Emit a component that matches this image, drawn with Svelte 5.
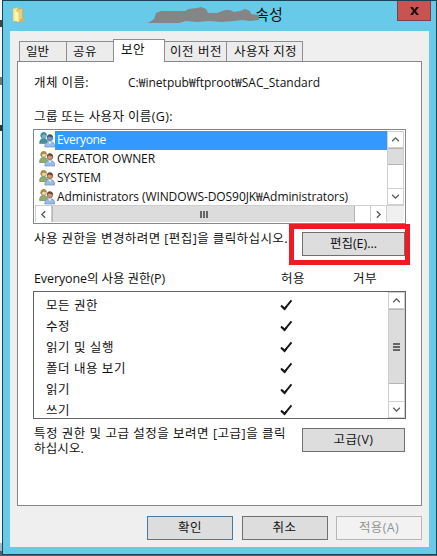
<script>
  const tabs = [
    { label: '일반', x: 6, w: 48, tw: 22 },
    { label: '공유', x: 6, w: 48, tw: 23 },
    { label: '보안', x: 7, w: 52, tw: 23, active: true },
    { label: '이전 버전', x: 5, w: 63, tw: 51 },
    { label: '사용자 지정', x: 7, w: 77, tw: 62 }
  ];
  const users = [
    { name: 'Everyone', w: 48 },
    { name: 'CREATOR OWNER', w: 97 },
    { name: 'SYSTEM', w: 43 },
    { name: 'Administrators (WINDOWS-DOS90JK₩Administrators)', w: 290 }
  ];
  const permissions = [
    { name: '모든 권한', w: 51 },
    { name: '수정', w: 23 },
    { name: '읽기 및 실행', w: 67 },
    { name: '폴더 내용 보기', w: 79 },
    { name: '읽기', w: 23 },
    { name: '쓰기', w: 23 }
  ];

  // Tracks a label so that it spans the given number of pixels.
  function fit(node, width) {
    const natural = node.getBoundingClientRect().width;
    const gap = (width + 1 - natural) / node.textContent.length;
    node.style.letterSpacing = `${gap.toFixed(3)}px`;
  }
</script>

{#snippet arrow(dir)}
  <svg class="arrow {dir}" width="9" height="9" viewBox="0 0 9 9"><path d="M1.2 6.2 4.5 2.9 7.8 6.2" /></svg>
{/snippet}

{#snippet people(tinted)}
  <svg class="people" class:tinted width="16" height="17" viewBox="0 0 16 17">
    <path class="body1" d="M.6 12.500c0-3.500 1.200-5 3.900-5s4.500 1.500 4.500 5z" fill="#8fae6c" stroke="#5f7e4f" stroke-width=".6" />
    <circle class="face1" cx="4.600" cy="4.600" r="2.700" fill="#f0d9a8" stroke="#8a7340" stroke-width=".6" />
    <path class="hair1" d="M1.600 5.500C.8-.2 8-.2 7.700 4.200 6 4 4 3 3.300 4.500L2.800 7z" fill="#a88a45" />
    <path d="M5.800 16c0-3.800 1.700-5.500 5-5.500s4.900 1.700 4.900 5.500z" fill="#9dbce2" stroke="#6285b4" stroke-width=".6" />
    <path d="m9.300 10.600 1.600 2.700 1.600-2.700z" fill="#f4f9ff" />
    <circle class="face2" cx="11" cy="7" r="2.800" fill="#cd9573" stroke="#6b4636" stroke-width=".6" />
    <path class="hair2" d="M8 6.900c-.4-5 6.300-4.500 6-.2C12.300 6.400 10.300 5 9 5.900z" fill="#6b4632" />
  </svg>
{/snippet}

<div class="screen">
  <div class="window">
    <header>
      <svg class="folder" width="14" height="17" viewBox="0 0 14 17">
        <path d="M1 1.500 6 .8v13L1 14.500z" fill="#f7e7a0" stroke="#d9bf69" stroke-width=".6" />
        <path d="M5 2.500 10.500 1.500v12L5 15.500z" fill="#edcf70" stroke="#c9a750" stroke-width=".6" />
        <path d="M3 4 6.500 5.500v9.500L3 13.500z" fill="#fff3b8" />
        <path d="m8 12 4.500-1v3L8 15z" fill="#d8b25a" />
      </svg>
      <span class="title"><span use:fit={27}>속성</span></span>
      <button class="close" aria-label="닫기">
        <svg width="9" height="8" viewBox="0 0 10 9"><path d="M0 0h3l2 2.700L7 0h3L6.600 4.400 10 9H7L5 6.200 3 9H0l3.400-4.600z" fill="#20100f" /></svg>
      </button>
    </header>
    <svg class="scribble" width="112" height="18" viewBox="0 0 112 18">
      <path d="M3 15 7 12 9 6 14 4H38L42 2 50 1 54 0 59 2 61 6 70 6 78 3 83 3 87 5 93 4 98 2 103 4 104 7 112 8V13L103 14 96 13 87 14 74 15 62 14 50 15 39 14 32 16H0z" fill="#858585" />
    </svg>

    <main>
      <nav>
        {#each tabs as t}
          <div class="tab" class:active={t.active} style="width:{t.w}px; padding-left:{t.x}px"><span use:fit={t.tw}>{t.label}</span></div>
        {/each}
      </nav>
      <section class="pane">
        <div class="object"><span class="key"><span use:fit={54}>개체 이름:</span></span><span class="latin" use:fit={191}>C:₩inetpub₩ftproot₩SAC_Standard</span></div>
        <div class="label"><span use:fit={138}>그룹 또는 사용자 이름(G):</span></div>

        <div class="userlist">
          <div class="top">
            <div class="users">
              {#each users as u, i}
                <div class="user" class:selected={i === 0}>
                  {@render people(i === 0)}
                  <div class="name"><span class="latin" use:fit={u.w}>{u.name}</span></div>
                </div>
              {/each}
            </div>
            <div class="vbar">
              <div class="sb">{@render arrow('up')}</div>
              <div class="thumb small"></div>
              <div class="track"></div>
              <div class="sb">{@render arrow('down')}</div>
            </div>
          </div>
          <div class="hbar">
            <div class="sb">{@render arrow('left')}</div>
            <div class="hthumb"><i></i><i></i><i></i></div>
            <div class="track"></div>
            <div class="sb">{@render arrow('right')}</div>
            <div class="corner"></div>
          </div>
        </div>

        <div class="action edit">
          <p><span use:fit={253}>사용 권한을 변경하려면 [편집]을 클릭하십시오.</span></p>
          <button class="btn"><span use:fit={46}>편집(E)...</span></button>
          <div class="mark"></div>
        </div>

        <div class="columns">
          <span class="c1"><span use:fit={130}>Everyone의 사용 권한(P)</span></span>
          <span class="c2"><span use:fit={23}>허용</span></span>
          <span><span use:fit={23}>거부</span></span>
        </div>

        <div class="permlist">
          <div class="perms">
            {#each permissions as p}
              <div class="perm">
                <span class="pname"><span use:fit={p.w}>{p.name}</span></span>
                <svg width="13" height="12" viewBox="0 0 13 12"><path d="M1 6.500 4.500 9.800 11.500 1.300" fill="none" stroke="#171717" stroke-width="1.900" /><path d="m2 7.300 2.600 2.800L6.800 7.300" fill="none" stroke="#171717" stroke-width="1.800" /></svg>
              </div>
            {/each}
          </div>
          <div class="vbar">
            <div class="sb">{@render arrow('up')}</div>
            <div class="thumb big"><i></i><i></i><i></i></div>
            <div class="track"></div>
            <div class="sb">{@render arrow('down')}</div>
          </div>
        </div>

        <div class="action advanced">
          <p><span class="line" use:fit={251}>특정 권한 및 고급 설정을 보려면 [고급]을 클릭</span><span class="line" use:fit={49}>하십시오.</span></p>
          <button class="btn"><span use:fit={39}>고급(V)</span></button>
        </div>
      </section>
      <footer>
        <button class="btn default"><span use:fit={23}>확인</span></button>
        <button class="btn"><span use:fit={23}>취소</span></button>
        <button class="btn disabled"><span use:fit={39}>적용(A)</span></button>
      </footer>
    </main>
  </div>
</div>

<style>
  :global(body) { margin: 0; }
  .screen, .screen :global(*) { box-sizing: border-box; }
  .screen {
    width: 437px; height: 556px; padding-left: 2px; overflow: hidden;
    background: linear-gradient(#f4f6f7 0 20px, #444 20px 27px, #f4f6f7 27px 77px, #777 77px 85px, #f4f6f7 85px 125px, #333 125px 131px, #f4f6f7 131px 543px, #a4bac9 543px 551px, #56606c 551px);
    font: 12.500px/16px "Open Sans", "Noto Sans CJK KR", sans-serif;
    color: #111;
  }
  span { white-space: nowrap; }
  .latin { font-size: 12px; }
  .window {
    position: relative; width: 435px; height: 555px; background: #67cae9;
    border: 1px solid #184453; padding: 0 6px 0 7px;
  }
  header { height: 30px; display: flex; align-items: flex-start; }
  .folder { margin: 6px 0 0 2px; }
  .title { margin: 4px 0 0 229px; font-size: 15px; line-height: 18px; }
  .close {
    margin: 0 -1px 0 auto; width: 34px; height: 20px; padding: 0; border: 1px solid #79404a; border-top: 0;
    background: #c75450; display: flex; align-items: center; justify-content: center;
  }
  .scribble { position: absolute; left: 144px; top: 6px; }
  main { width: 419px; height: 516px; background: #efefef; padding: 8px 7px 0; }
  nav { display: flex; height: 22px; padding-left: 2px; align-items: flex-end; }
  .tab {
    height: 20px; margin-right: -1px; border: 1px solid #8c8e94; border-bottom: 0;
    background: #ececec; display: flex; align-items: center;
  }
  .tab.active { position: relative; height: 23px; margin-bottom: -1px; background: #fff; padding-bottom: 3px; }
  .pane { width: 405px; height: 445px; border: 1px solid #85878b; background: #fff; padding: 13px 0 0 15px; }
  .object { display: flex; height: 16px; }
  .key { width: 94px; }
  .object, .label { padding-left: 1px; }
  .label { height: 16px; margin-top: 18px; }
  .userlist { width: 373px; height: 95px; margin-top: 4px; border: 1px solid #828790; padding: 1px; }
  .top { display: flex; height: 74px; }
  .users { width: 352px; height: 74px; overflow: hidden; }
  .user { display: flex; height: 19px; }
  .people { margin: 0 0 0 4px; flex: none; width: 16px; }
  .tinted .body1, .tinted .hair1 { fill: #3f8fa5; }
  .tinted .face1 { fill: #7fb9d6; stroke: #367691; }
  .tinted .face2 { fill: #7793b8; stroke: #345c8a; }
  .tinted .hair2 { fill: #36587e; }
  .name { flex: 1; padding: 1px 0 0 2px; height: 19px; }
  .selected .name { background: #3399ff; color: #fff; }
  .vbar { width: 17px; display: flex; flex-direction: column; background: #fff; border: 1px solid #cfcfcf; border-width: 0 1px; }
  .sb { width: 17px; height: 17px; flex: none; background: #fff; border: 1px solid #cfcfcf; display: flex; align-items: center; justify-content: center; }
  .vbar .sb { width: 15px; border-width: 1px 0; }
  .track { flex: 1; background: #fff; }
  .thumb { background: #dcdcdc; border: 1px solid #b5b5b5; border-width: 1px 0; }
  .small { height: 17px; }
  .big { height: 75px; flex: none; display: flex; flex-direction: column; align-items: center; justify-content: center; gap: 1px; }
  .big i { width: 7px; height: 2px; background: #666; }
  .hbar { display: flex; height: 17px; border-top: 1px solid #cfcfcf; }
  .hbar .sb { height: 16px; border-width: 0 1px; }
  .hthumb { width: 303px; background: #dcdcdc; border: 1px solid #b5b5b5; border-width: 0 1px; display: flex; gap: 1px; align-items: center; justify-content: center; }
  .hthumb i { width: 2px; height: 7px; background: #666; }
  .corner { width: 17px; background: #f0f0f0; }
  .arrow path { fill: none; stroke: #555; stroke-width: 1.300; }
  .down { transform: rotate(180deg); }
  .left { transform: rotate(-90deg); }
  .right { transform: rotate(90deg); }
  .action { position: relative; display: flex; justify-content: space-between; width: 372px; height: 24px; padding-left: 1px; }
  p { margin: 0; line-height: 15px; }
  .line { display: block; width: max-content; height: 15px; font-size: 12.500px; }
  .btn {
    width: 103px; height: 24px; padding: 0; border: 1px solid #707070; background: #dddddd;
    color: #111; font: inherit; display: flex; align-items: center; justify-content: center;
  }
  .edit { margin-top: 8px; }
  .edit p { margin-top: -1px; }
  .mark { position: absolute; left: 256px; top: -8px; width: 121px; height: 41px; border: 5px solid #ed1c24; }
  .columns { display: flex; height: 16px; margin-top: 15px; padding-left: 1px; }
  .c1 { width: 247px; }
  .c2 { width: 72px; }
  .permlist { width: 373px; height: 128px; margin-top: 4px; border: 1px solid #646464; display: flex; }
  .perms { width: 354px; padding-top: 3px; overflow: hidden; }
  .perm { display: flex; align-items: center; height: 21px; padding-left: 12px; }
  .pname { width: 234px; }
  .perm svg { margin-top: -2px; }
  .advanced { margin-top: 9px; }
  .advanced p { margin-top: -2px; }
  footer { display: flex; justify-content: flex-end; gap: 8.500px; padding-top: 10px; }
  footer .btn { width: 86px; }
  .default { border-color: #4b779d; }
  .disabled { background: #f2f2f2; border-color: #b8b8b8; color: #929292; }
</style>
